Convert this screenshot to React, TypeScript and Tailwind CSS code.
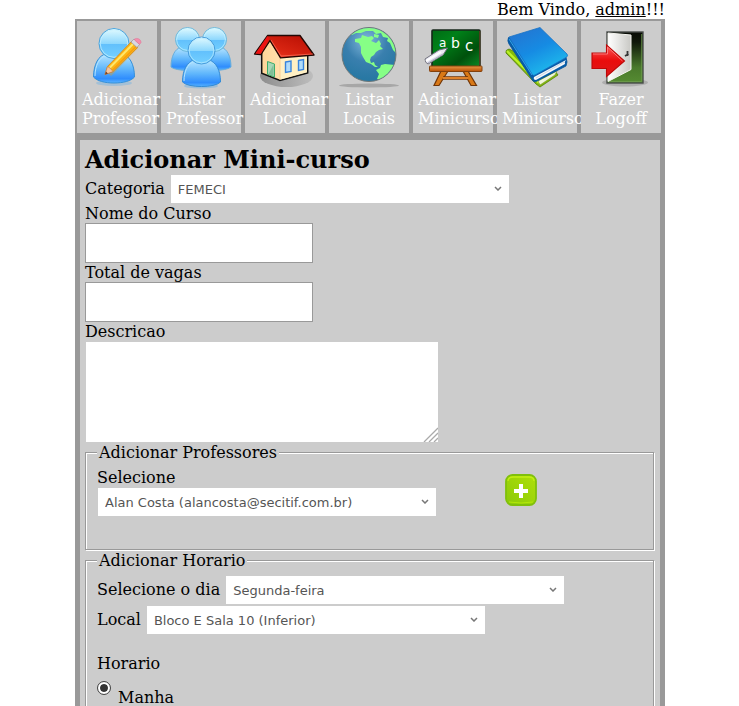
import React from 'react';

type IconProps = { children: React.ReactNode };

function Icon({ children }: IconProps) {
  return (
    <svg viewBox="0 0 64 64" className="block size-16" aria-hidden="true">
      {children}
    </svg>
  );
}

function PersonGradients({ id }: { id: string }) {
  return (
    <defs>
      <linearGradient id={`${id}-head`} x1="0" y1="0" x2="0" y2="1">
        <stop offset="0" stopColor="#e2fbff" />
        <stop offset="0.5" stopColor="#8fd8fd" />
        <stop offset="0.52" stopColor="#62c0fc" />
        <stop offset="1" stopColor="#74d0ff" />
      </linearGradient>
      <linearGradient id={`${id}-body`} x1="0" y1="0" x2="0" y2="1">
        <stop offset="0" stopColor="#b9e6ff" />
        <stop offset="0.5" stopColor="#62b8fc" />
        <stop offset="0.85" stopColor="#2f8dfd" />
        <stop offset="1" stopColor="#59b4ff" />
      </linearGradient>
    </defs>
  );
}

function AddPersonIcon() {
  return (
    <Icon>
      <PersonGradients id="one" />
      <ellipse cx="29" cy="57" rx="18" ry="3" fill="#58a8e8" opacity="0.35" />
      <path d="M8.5 51C8.5 38 14 29 21 28H37C44 29 49.5 38 49.5 51C46 55 38 57 29 57S12 55 8.5 51Z" fill="url(#one-body)" stroke="#3590d8" strokeWidth="1" />
      <path d="M10 50C10 39 15 31 21 29.5" fill="none" stroke="#b5e5ff" strokeWidth="1" />
      <circle cx="29" cy="17.5" r="15" fill="url(#one-head)" stroke="#4aa3dc" strokeWidth="1" />
      <circle cx="29" cy="17.5" r="13.8" fill="none" stroke="#c5f0ff" strokeWidth="0.8" />
      <path d="M25 49L52 21" stroke="#e8a020" strokeWidth="3" opacity="0.4" />
      <path d="M20 48.5L22.5 40.5L47 15L53 21L28 45.5Z" fill="#fdb515" stroke="#d88412" strokeWidth="0.8" />
      <path d="M24.5 42L49 17" stroke="#ffe66b" strokeWidth="2" />
      <path d="M27.5 44L52 19.5" stroke="#f08d08" strokeWidth="1" />
      <path d="M20 48.5L22.5 40.5L25 42L28 45.5Z" fill="#f4c5a0" stroke="#bd7a4d" strokeWidth="0.6" />
      <path d="M20 48.5L21 45.5L23 47.5Z" fill="#70402a" />
      <path d="M46 16L49 13L54.5 18.5L52 21.5Z" fill="#d9d9e2" stroke="#9696a2" strokeWidth="0.7" />
      <path d="M49.5 13C52 11.5 56 13 56 16.5L54.5 18.5L49.5 14Z" fill="#f58eac" stroke="#df7598" strokeWidth="0.6" />
    </Icon>
  );
}

function PeopleIcon() {
  return (
    <Icon>
      <PersonGradients id="many" />
      <ellipse cx="32" cy="60" rx="17" ry="2.5" fill="#58a8e8" opacity="0.4" />
      {[
        'M2 41C2 30 6 23 12 21H25C31 24 35 31 35 41C30 45.5 7 45.5 2 41Z',
        'M29 41C29 31 33 24 39 21H52C58 23 62 30 62 41C57 45.5 34 45.5 29 41Z',
      ].map((d) => (
        <path key={d} d={d} fill="url(#many-body)" stroke="#69aedb" strokeWidth="1" />
      ))}
      {[18.5, 45.5].map((cx) => (
        <g key={cx}>
          <circle cx={cx} cy="13.5" r="12" fill="url(#many-head)" stroke="#6eb7d9" strokeWidth="1" />
          <circle cx={cx} cy="13.5" r="10.9" fill="none" stroke="#ccf5ff" strokeWidth="0.7" />
        </g>
      ))}
      <path d="M13.5 56C13.5 44 18 36 25 34H40C47 36 51.5 44 51.5 56C46 62 19 62 13.5 56Z" fill="url(#many-body)" stroke="#328bd6" strokeWidth="1" />
      <path d="M15 55C15 45 19 38 24 36" fill="none" stroke="#b5e5ff" strokeWidth="1" />
      <circle cx="32.5" cy="24.5" r="13.5" fill="url(#many-head)" stroke="#469bdb" strokeWidth="1" />
      <circle cx="32.5" cy="24.5" r="12.3" fill="none" stroke="#b8eaff" strokeWidth="0.8" />
    </Icon>
  );
}

function HouseIcon() {
  return (
    <Icon>
      <defs>
        <linearGradient id="roof" x1="0" y1="1" x2="1" y2="0">
          <stop offset="0" stopColor="#f8452d" />
          <stop offset="0.4" stopColor="#d92512" />
          <stop offset="1" stopColor="#b50d02" />
        </linearGradient>
        <linearGradient id="wall" x1="0" y1="0" x2="1" y2="0">
          <stop offset="0" stopColor="#ffd598" />
          <stop offset="1" stopColor="#fff2cd" />
        </linearGradient>
        <linearGradient id="ground" x1="0" y1="0" x2="1" y2="0">
          <stop offset="0" stopColor="#8d8d8d" />
          <stop offset="1" stopColor="#bdbdbd" />
        </linearGradient>
      </defs>
      <ellipse cx="33.5" cy="50" rx="26.5" ry="11" fill="url(#ground)" />
      <path d="M8.7 25L17 14L28 31L54.7 28V47L27 54.5L8.7 47.3Z" fill="url(#wall)" stroke="#111" strokeWidth="1.5" />
      <path d="M27 31V54" stroke="#f5c98b" strokeWidth="0.7" />
      <path d="M27.7 31.5L54 29V46L27.7 53.5Z" fill="#fff0c4" />
      <path d="M14.5 35.5L21.5 38V51L14.5 48.3Z" fill="#a5d8b6" stroke="#3dad6c" strokeWidth="1" />
      <path d="M15.5 48L20.5 38.5V50Z" fill="#70b58a" opacity="0.7" />
      <path d="M32.5 36L38 35V45.5L32.5 46.5ZM45.5 34.5L50.5 33.5V43.5L45.5 44.5Z" fill="#b0dcfa" stroke="#3784dd" strokeWidth="1.4" />
      <path d="M14.5 9.5L1.5 28L8 28.5L17 14.5L27.5 31.8L61 29L47 9.5Z" fill="url(#roof)" stroke="#220704" strokeWidth="1.3" strokeLinejoin="round" />
      <path d="M14.5 10L2.5 27.5L7.5 27.7L16 13Z" fill="#ee1111" />
      <path d="M18 14L28 30L60 28" fill="none" stroke="#ff765f" strokeWidth="0.7" />
    </Icon>
  );
}

function GlobeIcon() {
  return (
    <Icon>
      <defs>
        <radialGradient id="sea" cx="0.45" cy="0.25" r="0.7">
          <stop offset="0" stopColor="#83b9dc" />
          <stop offset="0.55" stopColor="#397fae" />
          <stop offset="1" stopColor="#2878a3" />
        </radialGradient>
        <clipPath id="globe-edge">
          <circle cx="32" cy="28.5" r="26.5" />
        </clipPath>
      </defs>
      <ellipse cx="32" cy="59.5" rx="30" ry="2" fill="#a7a7a7" />
      <circle cx="32" cy="28.5" r="27" fill="url(#sea)" stroke="#6e7778" strokeWidth="1" />
      <g clipPath="url(#globe-edge)" fill="#86ff86">
        <path d="M12 9L18 4L24 2H39L46 5L53 11L58 20L59 27L56 24L53 17L50 15L51 12L46 11L44 7L39 8L36 5L29 5L24 7L19 7L15 9Z" />
        <path d="M18 13L24 12L25 9L31 11L35 10L37 12L34 15L39 17L42 14L44 18L43 20L46 23L42 24L39 26L37 29L34 31L33 34L34 37L37 36L38 39L41 41L38 41L34 38L29 36L26 31L24 27V21L22 17L18 16Z" />
        <path d="M37 8L42 9L41 12L37 11ZM44 39L48 38L58 39L57 44L50 50L43 54L40 53L42 48L39 44L43 42Z" />
      </g>
    </Icon>
  );
}

function BlackboardIcon() {
  return (
    <Icon>
      <defs>
        <linearGradient id="board" x1="0" y1="0" x2="1" y2="1">
          <stop offset="0" stopColor="#006a14" />
          <stop offset="0.3" stopColor="#008119" />
          <stop offset="0.7" stopColor="#00510c" />
          <stop offset="1" stopColor="#0b8a25" />
        </linearGradient>
        <linearGradient id="wood" x1="0" y1="0" x2="0" y2="1">
          <stop offset="0" stopColor="#e89845" />
          <stop offset="1" stopColor="#b74f03" />
        </linearGradient>
      </defs>
      <path d="M20 45L13 59.5H18L27 45M47 45L55.5 59.5H50L42 45" fill="#d97917" stroke="#713506" strokeWidth="1.2" />
      <path d="M22 52H47" stroke="#713506" strokeWidth="3.5" />
      <path d="M22 52H47" stroke="#de812a" strokeWidth="2" />
      <rect x="11" y="4" width="48" height="37" rx="1" fill="url(#board)" stroke="#16261a" strokeWidth="1.6" />
      <path d="M58.8 5V39" stroke="#8b4e26" strokeWidth="0.7" />
      <rect x="8.5" y="40" width="52.5" height="5.5" rx="0.8" fill="url(#wood)" stroke="#83410c" strokeWidth="1" />
      <g fill="white" fontFamily="'DejaVu Sans', sans-serif">
        <text x="18" y="21" fontSize="12">a</text>
        <text x="30" y="22" fontSize="14">b</text>
        <text x="44" y="25" fontSize="15">c</text>
      </g>
      <path d="M4 33L18 24L26.5 22L22 29L7 38Q4 37 4 33Z" fill="#e9e9f3" stroke="#72727e" strokeWidth="1" />
      <path d="M5 35L20 26" stroke="white" strokeWidth="2" />
      <path d="M7 37L22 28" stroke="#b4b4c6" strokeWidth="1.3" />
    </Icon>
  );
}

function BooksIcon() {
  return (
    <Icon>
      <defs>
        <linearGradient id="cover" x1="0.2" y1="0" x2="0.8" y2="1">
          <stop offset="0" stopColor="#2475d1" />
          <stop offset="0.45" stopColor="#168be3" />
          <stop offset="1" stopColor="#20c4ee" />
        </linearGradient>
      </defs>
      <path d="M1 27Q0 24 4 23L50 45L53 49L35 61L31 58Z" fill="#83ba0b" stroke="#527f07" strokeWidth="0.8" />
      <path d="M2 25L34 57" stroke="#bdf32a" strokeWidth="2" />
      <path d="M33 55L52 45L50 49L35 59Z" fill="#eff4dc" stroke="#789b20" strokeWidth="0.6" />
      <path d="M3.5 11.5Q2 15 4 18L28 55Q30 57 34 54L61 40L62 36L61 31Z" fill="#075ca8" stroke="#06549a" strokeWidth="0.8" />
      <path d="M29 51L61 34Q59 36 60 38L31 54Q28 54 29 51Z" fill="#f4f6fa" />
      <path d="M31 52L59 36" stroke="#b9c8d4" strokeWidth="0.7" />
      <path d="M4 11L35 1.5L62 28Q63.5 30 61 31.5L30 49Q28 50 27 48Z" fill="url(#cover)" stroke="#1974c5" strokeWidth="0.8" />
      <path d="M4 13L27 49" stroke="#31a3eb" strokeWidth="1" />
    </Icon>
  );
}

function LogoffIcon() {
  return (
    <Icon>
      <defs>
        <linearGradient id="outside" x1="0" y1="0" x2="0" y2="1">
          <stop offset="0" stopColor="#080b05" />
          <stop offset="0.2" stopColor="#10180b" />
          <stop offset="0.7" stopColor="#4a7a2c" />
          <stop offset="1" stopColor="#568c32" />
        </linearGradient>
        <linearGradient id="door" x1="0" y1="0" x2="1" y2="0">
          <stop offset="0" stopColor="#fff" />
          <stop offset="1" stopColor="#c8c8c4" />
        </linearGradient>
        <linearGradient id="arrow" x1="0" y1="0" x2="0" y2="1">
          <stop offset="0" stopColor="#ff5959" />
          <stop offset="0.5" stopColor="#e90c0c" />
          <stop offset="1" stopColor="#dc1919" />
        </linearGradient>
      </defs>
      <ellipse cx="36" cy="56.5" rx="23" ry="4" fill="#a1a1a1" opacity="0.7" />
      <rect x="18" y="6" width="36" height="51" fill="url(#outside)" stroke="#484c49" strokeWidth="1.4" />
      <path d="M52.7 8V55.5H20" fill="none" stroke="#6e9c4e" strokeWidth="0.8" />
      <path d="M19 7L42 9V43.5L19 55.5Z" fill="url(#door)" stroke="#f5f5f0" strokeWidth="1" />
      <path d="M38.5 25V30M36 30L39.5 28" stroke="#343434" strokeWidth="1.8" />
      <path d="M3 27H17.5V19L35.5 35L17.5 50.5V42.5H3Z" fill="url(#arrow)" stroke="#bd0808" strokeWidth="1.1" />
      <path d="M4 28H18.5V21L33.5 35" fill="none" stroke="#ff8b8b" strokeWidth="0.8" />
    </Icon>
  );
}

const menu = [
  { label: 'Adicionar Professor', icon: AddPersonIcon },
  { label: 'Listar Professor', icon: PeopleIcon },
  { label: 'Adicionar Local', icon: HouseIcon },
  { label: 'Listar Locais', icon: GlobeIcon },
  { label: 'Adicionar Minicurso', icon: BlackboardIcon },
  { label: 'Listar Minicurso', icon: BooksIcon },
  { label: 'Fazer Logoff', icon: LogoffIcon },
];

function SelectBox({ id, option }: { id: string; option: string }) {
  return (
    <div className="relative w-[340px] max-w-full">
      <select
        id={id}
        className="block h-[30px] w-full appearance-none border border-[#ccc] bg-white pr-6 pl-[7px] font-['DejaVu_Sans',sans-serif] text-[13px] text-[#555]"
      >
        <option>{option}</option>
      </select>
      <svg viewBox="0 0 8 5" className="pointer-events-none absolute top-3 right-2 h-[5px] w-2" aria-hidden="true">
        <path d="M1 1L4 4L7 1" fill="none" stroke="#777" strokeWidth="1.5" />
      </svg>
    </div>
  );
}

const groupClass =
  'mr-px border border-[#999] px-[11px] shadow-[1px_1px_0_#fff,inset_1px_1px_0_#fff]';
const inputClass = 'block h-10 w-[228px] max-w-full border border-[#999] bg-white px-2';

export default function App() {
  return (
    <div className="min-h-screen bg-white pl-px font-['DejaVu_Serif',serif] text-base leading-[19px] text-black">
      <div className="mx-auto flex min-h-screen w-full max-w-[590px] flex-col">
        <header>
          <p className="text-right">
            Bem Vindo, <a href="#admin" className="underline">admin</a>!!!
          </p>
          <nav className="bg-[#999] px-0.5 pt-0.5 pb-[7px]">
            <ul className="flex gap-1">
              {menu.map(({ label, icon: MenuIcon }) => (
                <li key={label} className="w-20 bg-[#ccc] p-[5px]">
                  <a href="#menu" className="block text-center text-white">
                    <span className="flex justify-center">
                      <MenuIcon />
                    </span>
                    {label}
                  </a>
                </li>
              ))}
            </ul>
          </nav>
        </header>

        <main className="grow border-x-[5px] border-[#999] bg-[#ccc] p-[5px]">
          <h1 className="text-2xl leading-[29px] font-bold">Adicionar Mini-curso</h1>
          <form>
            <div className="flex items-center gap-[5px]">
              <label htmlFor="categoria" className="pb-0.5">Categoria</label>
              <SelectBox id="categoria" option="FEMECI" />
            </div>
            <label htmlFor="nome" className="block">Nome do Curso</label>
            <input id="nome" type="text" className={inputClass} />
            <label htmlFor="vagas" className="block">Total de vagas</label>
            <input id="vagas" type="text" className={inputClass} />
            <label htmlFor="descricao" className="block">Descricao</label>
            <div className="relative w-[354px] max-w-full">
              <textarea id="descricao" className="block h-[102px] w-full resize-none border border-[#ccc] bg-white p-2" />
              <svg viewBox="0 0 15 15" className="pointer-events-none absolute right-px bottom-px size-[15px]" aria-hidden="true">
                <path d="M1 15L15 1M6 15L15 6M11 15L15 11" stroke="#aaa" strokeWidth="1.3" />
              </svg>
            </div>

            <fieldset className={`${groupClass} pb-8`}>
              <legend className="bg-[#ccc] px-0.5">Adicionar Professores</legend>
              <div className="flex items-start gap-[68px] pt-1.5">
                <div>
                  <label htmlFor="professor" className="block">Selecione</label>
                  <SelectBox id="professor" option="Alan Costa (alancosta@secitif.com.br)" />
                </div>
                <button type="button" aria-label="Adicionar" className="mt-1.5 block size-8">
                  <svg viewBox="0 0 32 32" className="block size-8" aria-hidden="true">
                    <defs>
                      <linearGradient id="lime" x1="0" y1="1" x2="1" y2="0">
                        <stop offset="0" stopColor="#8bc90a" />
                        <stop offset="1" stopColor="#afe008" />
                      </linearGradient>
                    </defs>
                    <rect x="1" y="1" width="30" height="30" rx="6.5" fill="url(#lime)" stroke="#80c00a" strokeWidth="1.8" />
                    <path d="M3 7Q3 3 8 3H24Q29 3 29 7" fill="none" stroke="#c4ef13" strokeWidth="1.3" />
                    <path d="M4 28Q16 30 28 28" fill="none" stroke="#b3e909" strokeWidth="1" />
                    <path d="M9 17H23M16 10V24" stroke="white" strokeWidth="4" />
                  </svg>
                </button>
              </div>
            </fieldset>

            <fieldset className={`${groupClass} mt-px pb-4`}>
              <legend className="bg-[#ccc] px-0.5">Adicionar Horario</legend>
              <div className="flex items-center gap-[5px] pt-[5px]">
                <label htmlFor="dia" className="pb-0.5">Selecione o dia</label>
                <SelectBox id="dia" option="Segunda-feira" />
              </div>
              <div className="flex items-center gap-[5px]">
                <label htmlFor="local" className="pb-0.5">Local</label>
                <SelectBox id="local" option="Bloco E Sala 10 (Inferior)" />
              </div>
              <p className="mt-[19px]">Horario</p>
              <div className="flex items-start gap-[7px] pt-2">
                <input
                  id="manha"
                  name="horario"
                  type="radio"
                  defaultChecked
                  className="size-[14px] shrink-0 appearance-none rounded-full border border-[#444] bg-[#333] bg-clip-content p-[2px] shadow-[inset_0_0_0_2px_#fff]"
                />
                <label htmlFor="manha" className="pt-[7px]">Manha</label>
              </div>
            </fieldset>
          </form>
        </main>
      </div>
    </div>
  );
}
